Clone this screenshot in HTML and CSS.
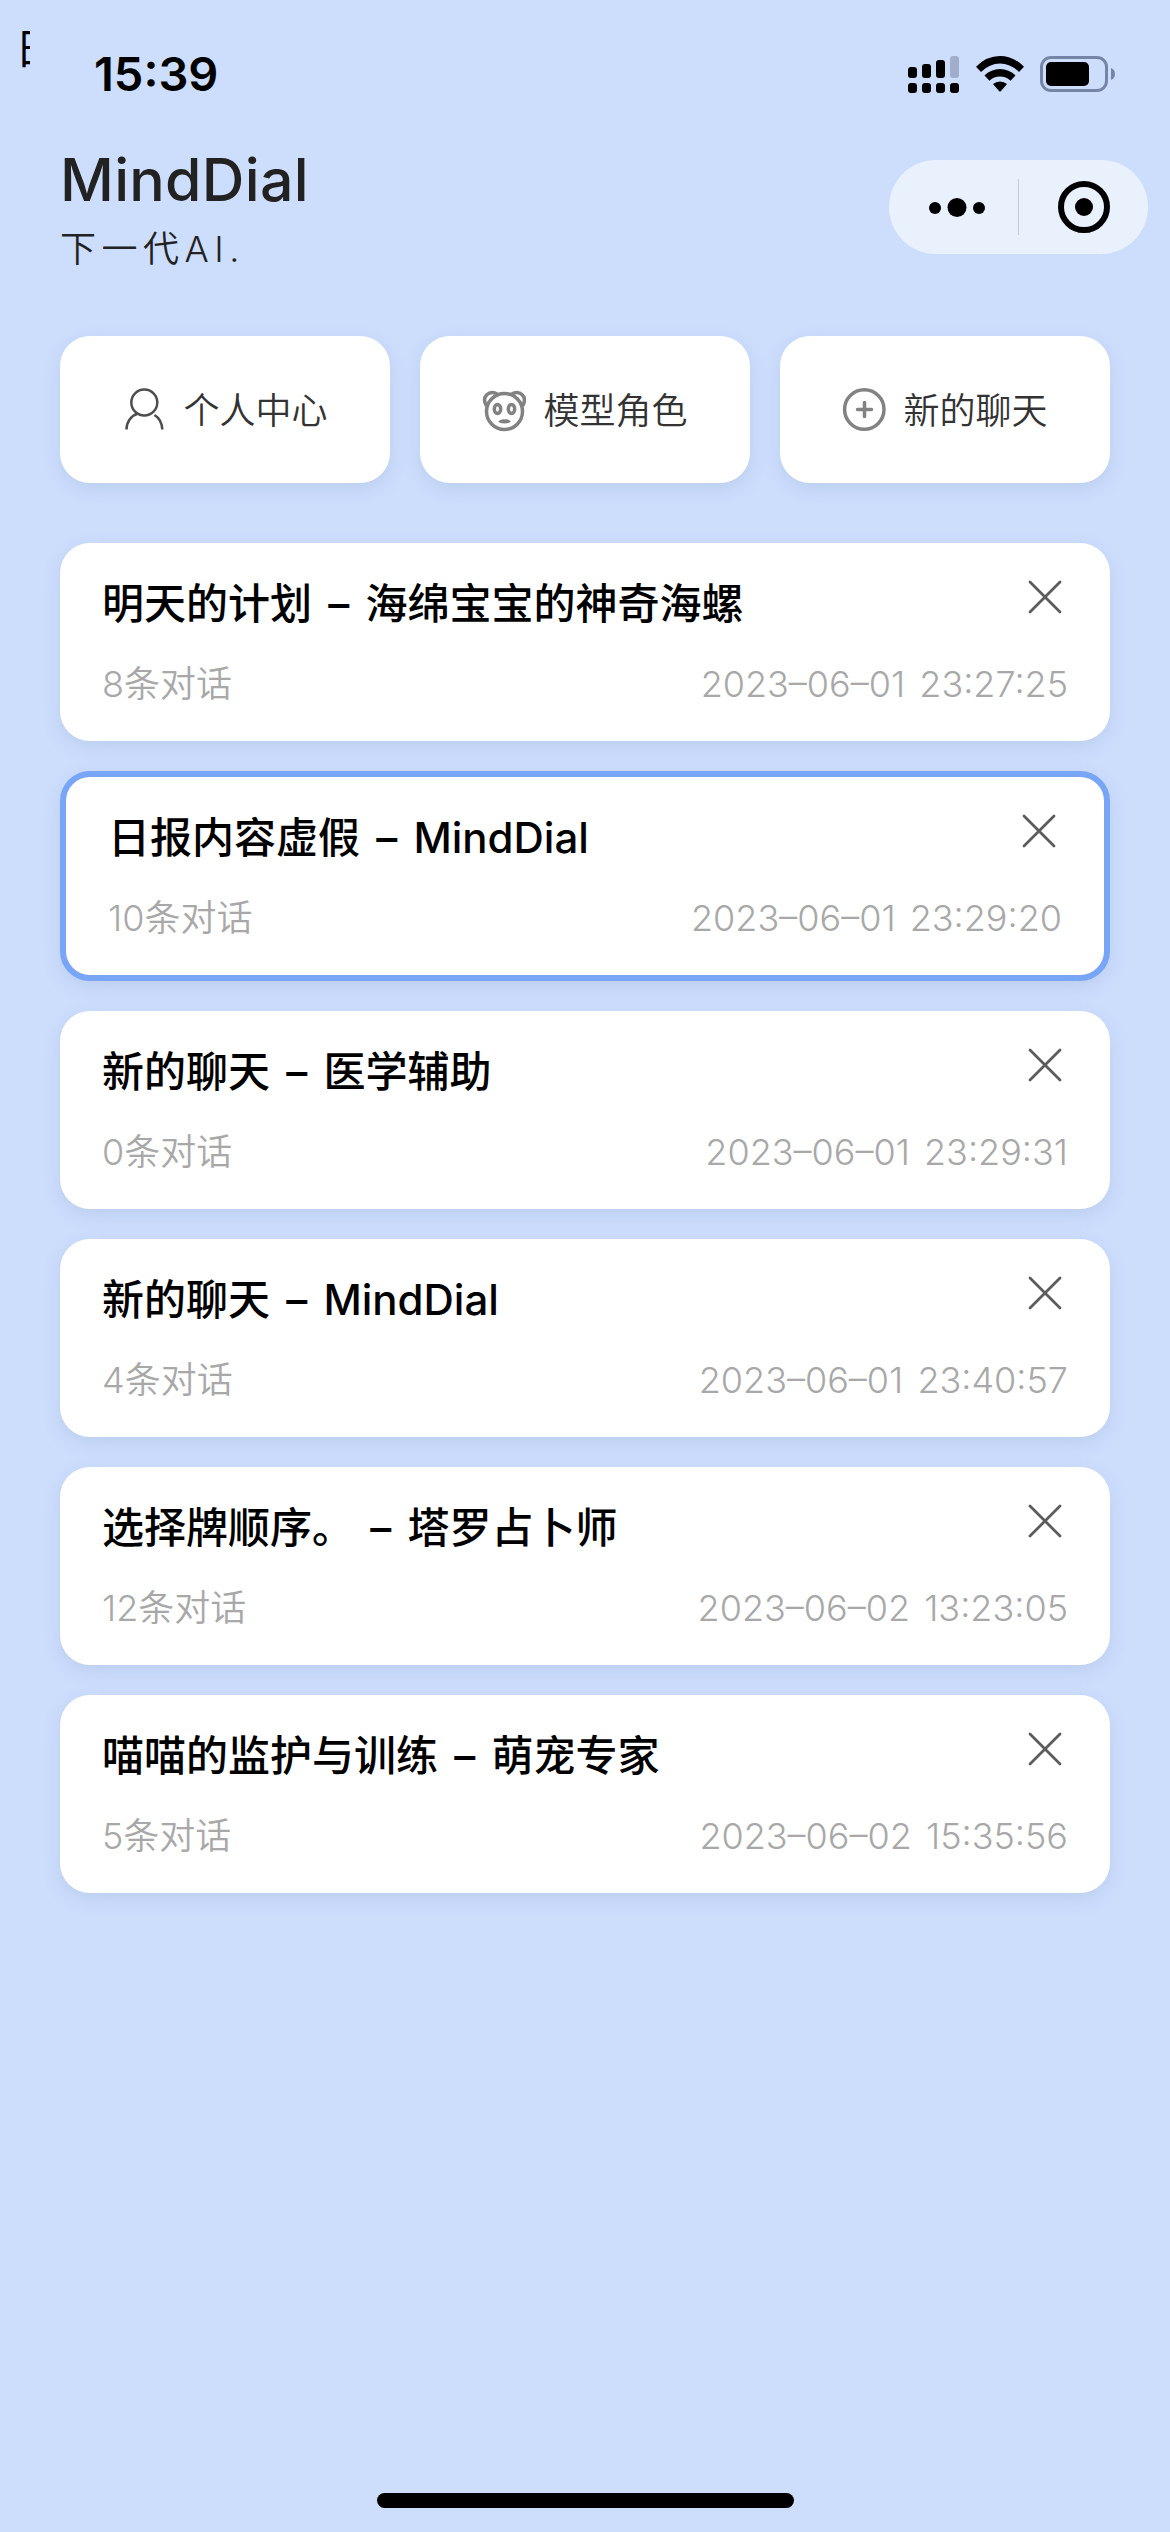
FILE: index.html
```html
<!DOCTYPE html>
<html lang="zh-CN">
<head>
  <meta charset="UTF-8">
  <title>MindDial</title>
  <link rel="stylesheet" href="styles.css">
</head>
<body>
  <div class="clip-text">日</div>

  <div class="status-bar">
    <span class="time">15:39</span>
    <div class="status-icons">
      <svg class="signal" width="52" height="38" viewBox="0 0 52 38">
        <rect x="0" y="11" width="9" height="11" rx="3"/>
        <rect x="14" y="8" width="9" height="14" rx="3"/>
        <rect x="28" y="4" width="9" height="18" rx="3"/>
        <rect x="42" y="0" width="9" height="22" rx="3" fill="#a0aeca"/>
        <rect x="0" y="27" width="9" height="10" rx="3"/>
        <rect x="14" y="27" width="9" height="10" rx="3"/>
        <rect x="28" y="27" width="9" height="10" rx="3"/>
        <rect x="42" y="27" width="9" height="10" rx="3"/>
      </svg>
      <svg class="wifi" width="48" height="36" viewBox="0 0 48 36">
        <path d="M0 10.7Q10.500 0 24 0T48 10.700L43 16Q34.500 7.500 24 7.500T5 16Z"/>
        <path d="M8.500 19.500Q15 13 24 13T39.500 19.500L34.500 24.700Q30 20.500 24 20.500T13.500 24.700Z"/>
        <path d="M17 28Q20 25.500 24 25.500T31 28L25 35Q24 36 23 35Z"/>
      </svg>
      <svg class="battery" width="76" height="36" viewBox="0 0 76 36">
        <rect x="1.500" y="1.500" width="65" height="33" rx="9.500" fill="none" stroke="#7685a6" stroke-width="3"/>
        <rect x="6" y="6" width="43" height="24" rx="5"/>
        <path d="M71 12Q75 13.500 75 18T71 24Z" fill="#7685a6"/>
      </svg>
    </div>
  </div>

  <div class="header">
    <div>
      <h1>MindDial</h1>
      <p class="slogan">下一代AI.</p>
    </div>
    <div class="capsule">
      <svg width="258" height="94" viewBox="0 0 258 94">
        <circle cx="46" cy="48" r="6"/>
        <circle cx="68" cy="47.500" r="9.500"/>
        <circle cx="90" cy="48" r="6"/>
        <path d="M129.500 19V75" stroke="#c3cbd8" stroke-width="1"/>
        <circle cx="195" cy="47" r="23" fill="none" stroke="#000" stroke-width="6"/>
        <circle cx="195" cy="47" r="9"/>
      </svg>
    </div>
  </div>

  <div class="menu">
    <div class="menu-item">
      <svg width="44" height="44" viewBox="0 0 44 44" fill="none" stroke="#4d4d4d" stroke-width="2.500">
        <circle cx="22.300" cy="14.500" r="13"/>
        <path d="M4.500 41.500C4.500 34 9 27.500 16 25.500M32.500 27C37.500 30 40 35 40.300 41.500"/>
      </svg>
      <span>个人中心</span>
    </div>
    <div class="menu-item">
      <svg width="44" height="44" viewBox="0 0 44 44" fill="none" stroke="#828282" stroke-width="3.500">
        <circle cx="22.500" cy="23.500" r="18"/>
        <path d="M4.500 18C-1 9 7 1 16 6.500M40.500 18C46 9 38 1 29 6.500"/>
        <ellipse cx="15.500" cy="21" rx="3.200" ry="4.500"/>
        <ellipse cx="29.500" cy="21" rx="3.200" ry="4.500"/>
        <path d="M17.500 33.500Q20.500 31.500 22.500 32.500Q24.500 31.500 27.500 33.500Q22.500 35.500 17.500 33.500Z" stroke-width="2" stroke-linejoin="round" fill="#828282"/>
      </svg>
      <span>模型角色</span>
    </div>
    <div class="menu-item">
      <svg width="44" height="44" viewBox="0 0 44 44" fill="none" stroke="#828282" stroke-width="3.500">
        <circle cx="22.300" cy="21.500" r="19.700"/>
        <path d="M15.500 21.500H29.500M22.500 14.500V28.500" stroke-linecap="round"/>
      </svg>
      <span>新的聊天</span>
    </div>
  </div>

  <div class="chat-list">
    <div class="chat">
      <div class="row">
        <h2>明天的计划 – 海绵宝宝的神奇海螺</h2>
        <svg class="close" width="34" height="34" viewBox="0 0 34 34"><path d="M2 2L32 32M32 2L2 32"/></svg>
      </div>
      <div class="row info">
        <span>8条对话</span>
        <span class="date">2023–06–01 23:27:25</span>
      </div>
    </div>
    <div class="chat active">
      <div class="row">
        <h2>日报内容虚假 – MindDial</h2>
        <svg class="close" width="34" height="34" viewBox="0 0 34 34"><path d="M2 2L32 32M32 2L2 32"/></svg>
      </div>
      <div class="row info">
        <span>10条对话</span>
        <span class="date">2023–06–01 23:29:20</span>
      </div>
    </div>
    <div class="chat">
      <div class="row">
        <h2>新的聊天 – 医学辅助</h2>
        <svg class="close" width="34" height="34" viewBox="0 0 34 34"><path d="M2 2L32 32M32 2L2 32"/></svg>
      </div>
      <div class="row info">
        <span>0条对话</span>
        <span class="date">2023–06–01 23:29:31</span>
      </div>
    </div>
    <div class="chat">
      <div class="row">
        <h2>新的聊天 – MindDial</h2>
        <svg class="close" width="34" height="34" viewBox="0 0 34 34"><path d="M2 2L32 32M32 2L2 32"/></svg>
      </div>
      <div class="row info">
        <span>4条对话</span>
        <span class="date">2023–06–01 23:40:57</span>
      </div>
    </div>
    <div class="chat">
      <div class="row">
        <h2>选择牌顺序。 – 塔罗占卜师</h2>
        <svg class="close" width="34" height="34" viewBox="0 0 34 34"><path d="M2 2L32 32M32 2L2 32"/></svg>
      </div>
      <div class="row info">
        <span>12条对话</span>
        <span class="date">2023–06–02 13:23:05</span>
      </div>
    </div>
    <div class="chat">
      <div class="row">
        <h2>喵喵的监护与训练 – 萌宠专家</h2>
        <svg class="close" width="34" height="34" viewBox="0 0 34 34"><path d="M2 2L32 32M32 2L2 32"/></svg>
      </div>
      <div class="row info">
        <span>5条对话</span>
        <span class="date">2023–06–02 15:35:56</span>
      </div>
    </div>
  </div>

  <div class="home-bar"></div>
</body>
</html>
```
FILE: styles.css
```css
* {
    box-sizing: border-box;
}
body {
    margin: 0;
    height: 2532px;
    display: flex;
    flex-direction: column;
    background-color: #cdddfc;
    font-family: Inter, "Noto Sans CJK SC", sans-serif;
    color: #000;
    overflow: hidden;
}
h1, h2, p {
    margin: 0;
}
svg {
    display: block;
    flex: none;
}
.clip-text {
    position: absolute;
    left: 15px;
    top: 19px;
    width: 15px;
    height: 60px;
    line-height: 60px;
    font-size: 42px;
    overflow: hidden;
}
.status-bar {
    height: 141px;
    padding: 0 54px 0 94px;
    display: flex;
    justify-content: space-between;
}
.time {
    margin-top: 44px;
    line-height: 60px;
    font-size: 47px;
    font-weight: 600;
}
.status-icons {
    display: flex;
    gap: 16px;
    margin-top: 56px;
}
.header {
    height: 195px;
    padding: 0 22px 0 60px;
    display: flex;
    justify-content: space-between;
}
h1 {
    line-height: 78px;
    font-size: 59px;
    font-weight: 550;
    letter-spacing: 0.3px;
    color: #222;
}
.slogan {
    line-height: 60px;
    font-size: 36px;
    font-weight: 350;
    letter-spacing: 5.5px;
    color: #222;
}
.capsule {
    width: 259px;
    height: 94px;
    margin-top: 19px;
    border-radius: 47px;
    background-color: #e9f1fd;
}
.menu {
    display: grid;
    grid-template-columns: repeat(3, 1fr);
    gap: 30px;
    padding: 0 60px;
}
.menu-item {
    height: 147px;
    display: flex;
    align-items: center;
    justify-content: center;
    gap: 17px;
    border-radius: 30px;
    background-color: #fff;
    box-shadow: 0 6px 18px rgba(120, 150, 190, 0.2);
    font-size: 36px;
    font-weight: 350;
    color: #333;
}
.menu-item span {
    margin-bottom: 4px;
}
.chat-list {
    display: flex;
    flex-direction: column;
    gap: 30px;
    padding: 60px 60px 0;
}
.chat {
    padding: 31px 42px 0;
    height: 198px;
    border-radius: 30px;
    background-color: #fff;
    box-shadow: 0 6px 18px rgba(120, 150, 190, 0.2);
}
.chat.active {
    height: 210px;
    border: 6px solid #78a5f5;
}
.row {
    display: flex;
    justify-content: space-between;
}
h2 {
    line-height: 60px;
    font-size: 42px;
    font-weight: 500;
    word-spacing: 5px;
}
.close {
    margin: 6px 6px 0 0;
    fill: none;
    stroke: #5c5c5c;
    stroke-width: 2.8;
    stroke-linecap: round;
}
.info {
    margin-top: 20px;
    line-height: 60px;
    font-size: 36px;
    font-weight: 350;
    color: #a8a8a8;
}
.date {
    font-weight: 300;
    word-spacing: 4px;
}
.home-bar {
    width: 417px;
    height: 15px;
    margin: auto auto 24px;
    border-radius: 8px;
    background-color: #000;
}
```
